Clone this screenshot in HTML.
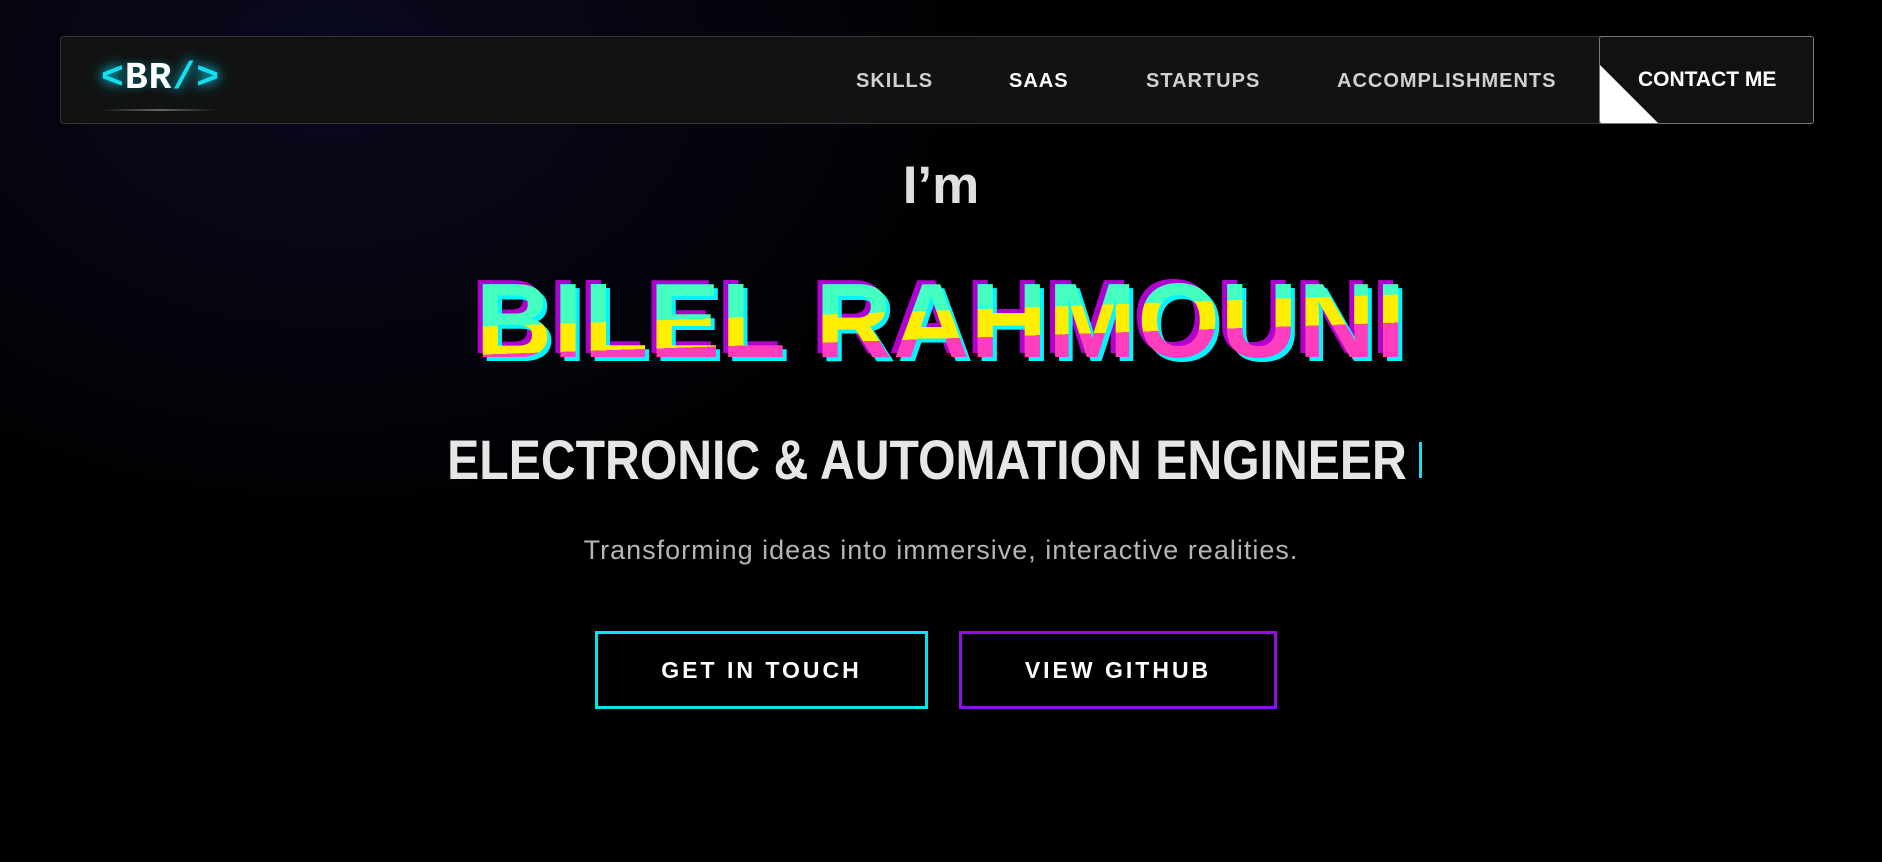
<!DOCTYPE html>
<html><head><style>
*{margin:0;padding:0;box-sizing:border-box}
body{width:1882px;height:862px;overflow:hidden;background:#000;font-family:"Liberation Sans",sans-serif;position:relative}
.bg{position:absolute;inset:0;background:radial-gradient(ellipse 700px 500px at 330px 60px,#0a0a1e 0%,#050510 50%,#000 100%)}
.nav{position:absolute;left:60px;top:36px;width:1752px;height:88px;background:#121212;border:1px solid #333;border-radius:3px}
.logo{position:absolute;left:40px;top:20px;font-family:"Liberation Mono",monospace;font-weight:bold;font-size:38px;color:#fff;letter-spacing:1px}
.logo .c{color:#12e0f0;text-shadow:0 0 10px #0bc7dd,0 0 18px #0a8fa0}
.logo .w{text-shadow:0 0 8px rgba(0,200,230,.4)}
.uline{position:absolute;left:38px;top:72px;width:120px;height:2px;background:linear-gradient(90deg,transparent,#666,transparent)}
.nl{position:absolute;top:33px;font-weight:bold;font-size:20px;color:#d0d0d0;letter-spacing:1px}
.cta{position:absolute;left:1538px;top:-1px;width:215px;height:88px;border:1px solid #777;border-radius:3px;background:#111;overflow:hidden}
.cta span{position:absolute;left:38px;top:31px;font-weight:bold;font-size:21px;color:#fff}
.cta i{position:absolute;left:0;bottom:0;width:0;height:0;border-left:58px solid #fff;border-top:58px solid transparent}
.im{position:absolute;left:0;width:1882px;text-align:center;top:155px;font-weight:bold;font-size:53px;color:#e0e0e0}
.name{position:absolute;left:0;width:1882px;text-align:center;top:266px;font-weight:900;font-size:106px;letter-spacing:1px;line-height:110px}
.name span{position:absolute;left:0;width:100%;text-align:center}
.n1{color:#b000d0;transform:translate(-5px,-4px)}
.n2{color:#00f6ff;transform:translate(4px,4px)}
.n3{background:linear-gradient(178deg,#45ffc0 0%,#45ffc0 44%,#ffee00 44%,#ffee00 60%,#ff3dbd 60%,#ff3dbd 100%);-webkit-background-clip:text;background-clip:text;color:transparent}
.sub{position:absolute;left:-14px;width:1882px;text-align:center;top:427px;font-weight:bold;font-size:56px;color:#e6e6e6;transform:scaleX(.86)}
.cur{position:absolute;left:1419px;top:442px;width:3px;height:36px;background:#12e0f0}
.tag{position:absolute;left:0;width:1882px;text-align:center;top:535px;font-size:27px;letter-spacing:1px;color:#b5b5b5}
.btn{position:absolute;top:631px;height:78px;border:3px solid;display:flex;align-items:center;justify-content:center;font-weight:bold;font-size:23px;letter-spacing:3px;color:#fff}
.b1{left:595px;width:333px;border-color:#00e5f0}
.b2{left:959px;width:318px;border-color:#9010e0}
</style></head><body>
<div class="bg"></div>
<div class="nav">
<div class="logo"><span class="c">&lt;</span><span class="w">BR</span><span class="c">/&gt;</span></div>
<div class="uline"></div>
<div class="nl" style="left:795px">SKILLS</div>
<div class="nl" style="left:948px;color:#fff">SAAS</div>
<div class="nl" style="left:1085px">STARTUPS</div>
<div class="nl" style="left:1276px">ACCOMPLISHMENTS</div>
<div class="cta"><i></i><span>CONTACT ME</span></div>
</div>
<div class="im">I’m</div>
<div class="name"><span class="n1">BILEL RAHMOUNI</span><span class="n2">BILEL RAHMOUNI</span><span class="n3">BILEL RAHMOUNI</span></div>
<div class="sub">ELECTRONIC &amp; AUTOMATION ENGINEER</div>
<div class="cur"></div>
<div class="tag">Transforming ideas into immersive, interactive realities.</div>
<div class="btn b1">GET IN TOUCH</div>
<div class="btn b2">VIEW GITHUB</div>
</body></html>
